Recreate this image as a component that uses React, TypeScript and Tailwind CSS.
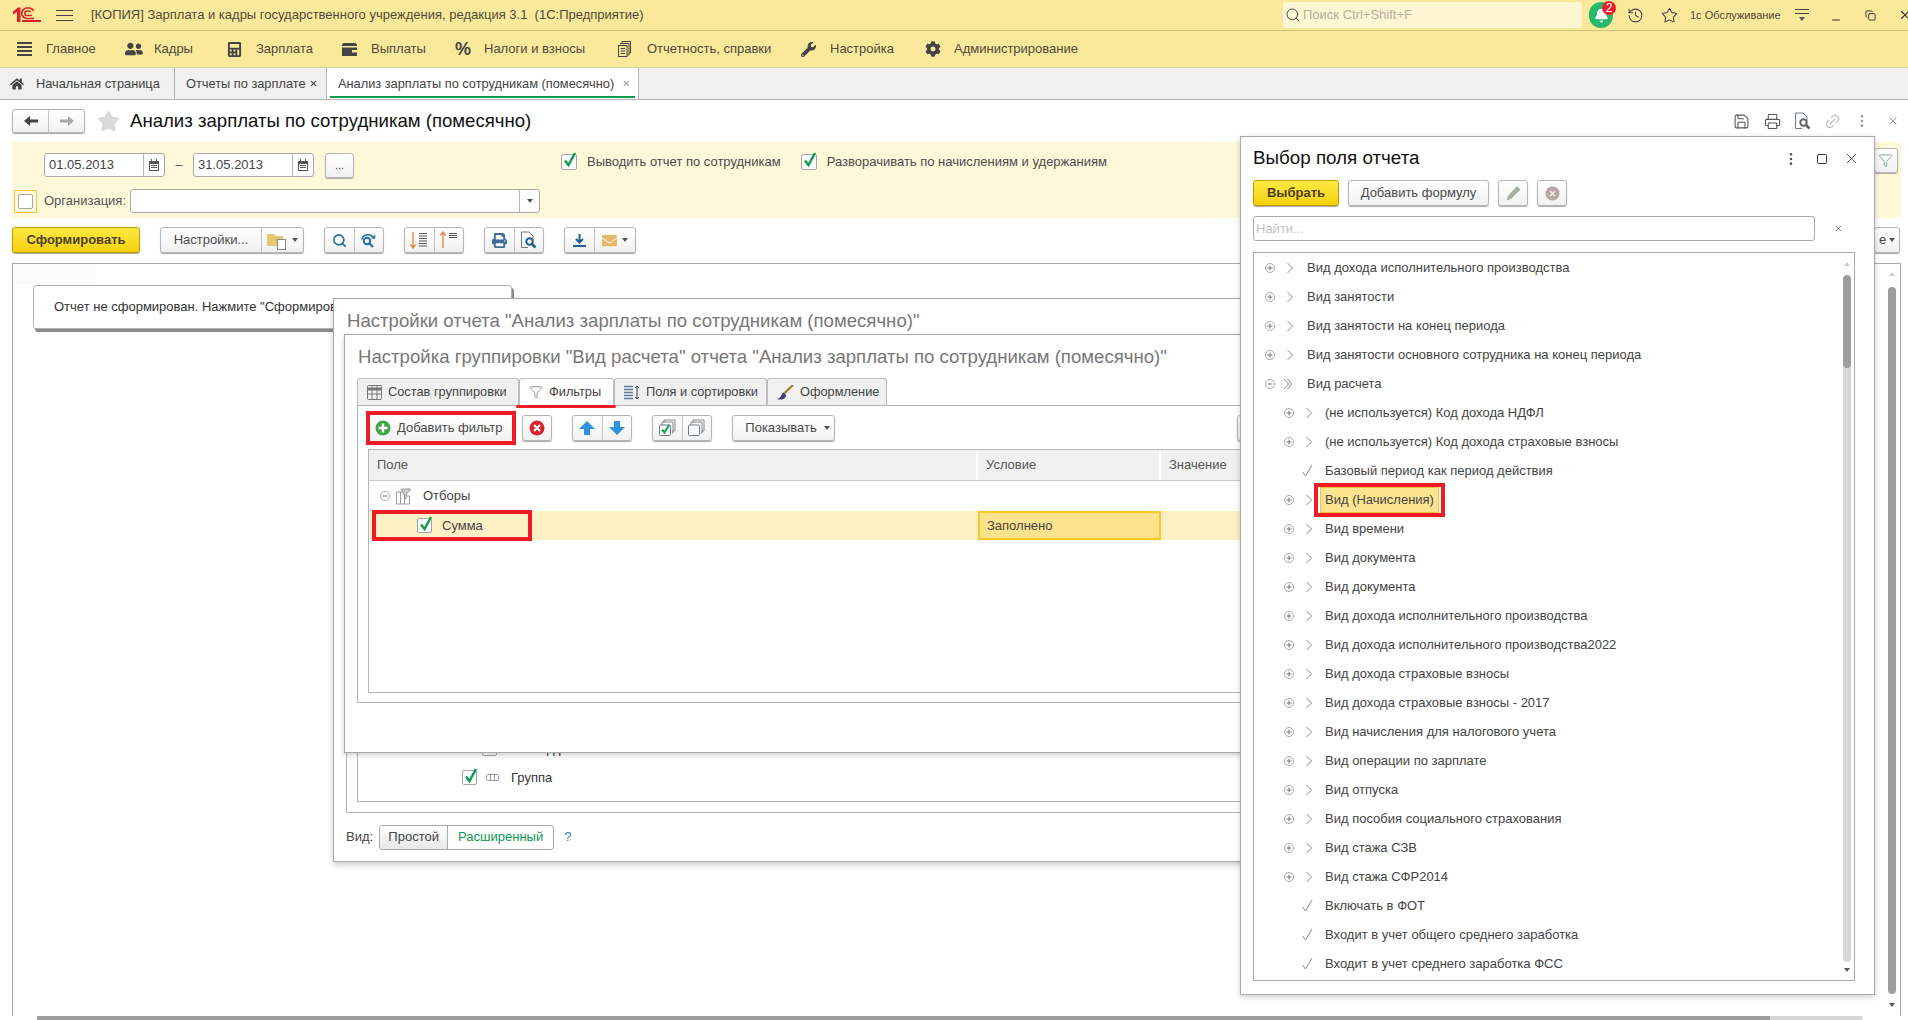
import type { ReactNode } from "react";
import { FaCalculator, FaCog, FaEnvelope, FaFolder, FaHome, FaPrint, FaUserFriends, FaWrench } from "react-icons/fa";
import { Bell, Copy, EllipsisVertical, Filter, History, Link2, Minus, Printer, Save, Search, Square, Star, X } from "lucide-react";

const btn = "flex shrink-0 items-center justify-center border border-[#b5b5b5] rounded-[3px] bg-linear-to-b from-white to-[#f1f1f1] shadow-[0_1px_1px_#a8a8a8] text-[#4b4b4b]";
const btnYellow = "flex shrink-0 items-center justify-center border border-[#b99c00] rounded-[3px] bg-linear-to-b from-[#ffe940] to-[#f5d000] shadow-[0_1px_1px_#a8a8a8] text-[#4b4020] font-bold";
const cell = "flex items-center justify-center h-full border-r border-[#c4c4c4] last:border-r-0";

const menu = [
  { label: "Главное", w: "w-[108px]", icon: <Burger /> },
  { label: "Кадры", w: "w-[102px]", icon: <FaUserFriends size={18} color="#444" /> },
  { label: "Зарплата", w: "w-[115px]", icon: <FaCalculator size={15} color="#444" /> },
  { label: "Выплаты", w: "w-[113px]", icon: <Wallet /> },
  { label: "Налоги и взносы", w: "w-[163px]", icon: <span className="text-[18px] font-bold text-[#444]">%</span> },
  { label: "Отчетность, справки", w: "w-[183px]", icon: <ReportsIcon /> },
  { label: "Настройка", w: "w-[124px]", icon: <FaWrench size={15} color="#444" /> },
  { label: "Администрирование", w: "w-[200px]", icon: <FaCog size={16} color="#444" /> },
];

const tree: { text: string; level: number; kind: "plus" | "open" | "check"; selected?: boolean }[] = [
  { text: "Вид дохода исполнительного производства", level: 0, kind: "plus" },
  { text: "Вид занятости", level: 0, kind: "plus" },
  { text: "Вид занятости на конец периода", level: 0, kind: "plus" },
  { text: "Вид занятости основного сотрудника на конец периода", level: 0, kind: "plus" },
  { text: "Вид расчета", level: 0, kind: "open" },
  { text: "(не используется) Код дохода НДФЛ", level: 1, kind: "plus" },
  { text: "(не используется) Код дохода страховые взносы", level: 1, kind: "plus" },
  { text: "Базовый период как период действия", level: 1, kind: "check" },
  { text: "Вид (Начисления)", level: 1, kind: "plus", selected: true },
  { text: "Вид времени", level: 1, kind: "plus" },
  { text: "Вид документа", level: 1, kind: "plus" },
  { text: "Вид документа", level: 1, kind: "plus" },
  { text: "Вид дохода исполнительного производства", level: 1, kind: "plus" },
  { text: "Вид дохода исполнительного производства2022", level: 1, kind: "plus" },
  { text: "Вид дохода страховые взносы", level: 1, kind: "plus" },
  { text: "Вид дохода страховые взносы - 2017", level: 1, kind: "plus" },
  { text: "Вид начисления для налогового учета", level: 1, kind: "plus" },
  { text: "Вид операции по зарплате", level: 1, kind: "plus" },
  { text: "Вид отпуска", level: 1, kind: "plus" },
  { text: "Вид пособия социального страхования", level: 1, kind: "plus" },
  { text: "Вид стажа СЗВ", level: 1, kind: "plus" },
  { text: "Вид стажа СФР2014", level: 1, kind: "plus" },
  { text: "Включать в ФОТ", level: 1, kind: "check" },
  { text: "Входит в учет общего среднего заработка", level: 1, kind: "check" },
  { text: "Входит в учет среднего заработка ФСС", level: 1, kind: "check" },
];

function Burger() {
  return (
    <span className="flex flex-col gap-[2px] w-[15px]">
      <i className="h-[2px] bg-[#444]" />
      <i className="h-[2px] bg-[#444]" />
      <i className="h-[2px] bg-[#444]" />
      <i className="h-[2px] bg-[#444]" />
    </span>
  );
}

function Wallet() {
  return (
    <svg width="15" height="13" viewBox="0 0 15 13">
      <path d="M0 1.500 1.500 0h12L15 1.500V3H0zM0 4.500h15V13H0zM10 7v2.500h5V7z" fill="#444" fillRule="evenodd" />
    </svg>
  );
}

function ReportsIcon() {
  return (
    <svg width="13" height="16" viewBox="0 0 13 16" fill="none">
      <path d="M4 2V.5h8.500V12H11" stroke="#444" />
      <path d="M2.500 3.500V2.500H11V14H9.500" stroke="#444" />
      <rect x=".5" y="4.500" width="8.500" height="11" stroke="#444" />
      <path d="M2.500 7.500h4.500M2.500 10h4.500M2.500 12.500h4.500" stroke="#444" />
    </svg>
  );
}

function Logo() {
  return (
    <svg width="29" height="18" viewBox="0 0 29 18" fill="none">
      <path d="M1 5.500 6 1.500h2.500V16H5V6L1 8.500z" fill="#d9252a" />
      <path d="M22 12.500h-7a5 5 0 0 1 0-10.500h2a5 5 0 0 1 4.500 3" stroke="#d9252a" strokeWidth="1.700" />
      <path d="M20 9.500h-5a2 2 0 0 1 0-4.500h2a2 2 0 0 1 1.500 .8" stroke="#d9252a" strokeWidth="1.500" />
      <path d="M10 15h19" stroke="#d9252a" strokeWidth="2" />
    </svg>
  );
}

function Check({ small }: { small?: boolean }) {
  return (
    <span className={`relative block shrink-0 border border-[#a5a5a5] rounded-[2px] bg-white ${small ? "w-[15px] h-[15px]" : "w-[16px] h-[16px]"}`}>
      <svg className="absolute left-[1px] top-[-4px]" width="14" height="17" viewBox="0 0 14 17" fill="none">
        <path d="M2 9.500 5.500 14 12 2" stroke="#0d9b50" strokeWidth="2.400" />
      </svg>
    </span>
  );
}

function CalendarBtn() {
  return (
    <span className="flex items-center justify-center w-[21px] h-full border-l border-[#b5b5b5]">
      <svg width="10" height="12" viewBox="0 0 10 12">
        <path d="M0 2h2V0h1v2h4V0h1v2h2v10H0zM1 5v6h8V5z" fill="#555" fillRule="evenodd" />
        <path d="M2 6h6v1H2zM2 8h6v1H2z" fill="#555" />
      </svg>
    </span>
  );
}

function DateField({ value }: { value: string }) {
  return (
    <div className="flex items-center w-[121px] h-[24px] border border-[#a9a9a9] rounded-[3px] bg-white">
      <span className="flex-1 pl-[4px] text-[#444]">{value}</span>
      <CalendarBtn />
    </div>
  );
}

function Caret() {
  return <i className="block w-0 h-0 border-x-[3px] border-x-transparent border-t-[4px] border-t-[#555]" />;
}

function SortIcon({ up }: { up?: boolean }) {
  return (
    <svg width="20" height="18" viewBox="0 0 20 18" fill="none">
      <path d={up ? "M4 17V2M1.500 4.500 4 1l2.500 3.500" : "M4 1v15M1.500 13.500 4 17l2.500-3.500"} stroke="#e8823a" strokeWidth="1.300" />
      <path d={up ? "M10 2.500h8M10 4.500h8M10 6.500h8" : "M10 2.500h8M10 5h8M10 7.500h8M10 10h8M10 12.500h8M10 15h8"} stroke="#555" strokeWidth="1" />
    </svg>
  );
}

function PreviewIcon({ color = "#1f5f86" }: { color?: string }) {
  return (
    <svg width="17" height="19" viewBox="0 0 17 19" fill="none">
      <path d="M8 16.500H1.500V1H9l4 4v4" stroke="#6d7d88" strokeWidth="1" />
      <circle cx="9.500" cy="10.500" r="3.200" stroke={color} strokeWidth="2" />
      <path d="m12 13 3.500 3.500" stroke={color} strokeWidth="2.500" />
    </svg>
  );
}

function RefineIcon() {
  return (
    <svg width="17" height="17" viewBox="0 0 17 17" fill="none">
      <circle cx="7" cy="9" r="3.200" stroke="#1f6ea5" strokeWidth="2" />
      <path d="m9.500 11.500 3.500 3.500" stroke="#1f6ea5" strokeWidth="2.200" />
      <path d="M2 7.500C2.500 3 9 1 13 5" stroke="#1f6ea5" strokeWidth="1.600" />
      <path d="M15.500 2.500 15 7l-4-.8z" fill="#1f6ea5" />
    </svg>
  );
}

function FilterCheck({ label, className }: { label: string; className: string }) {
  return (
    <label className={`flex items-center gap-[10px] ${className}`}>
      <Check />
      <span className="text-[#4b4b4b] whitespace-nowrap">{label}</span>
    </label>
  );
}

function PlusMark() {
  return (
    <svg className="shrink-0" width="10" height="10" viewBox="0 0 10 10" fill="none">
      <circle cx="5" cy="5" r="4.500" stroke="#a9a9a9" />
      <path d="M2.500 5h5M5 2.500v5" stroke="#777" />
    </svg>
  );
}

function MinusMark() {
  return (
    <svg className="shrink-0" width="10" height="10" viewBox="0 0 10 10" fill="none">
      <circle cx="5" cy="5" r="4.500" stroke="#a9a9a9" />
      <path d="M2.500 5h5" stroke="#777" />
    </svg>
  );
}

function Chevron({ open }: { open?: boolean }) {
  return (
    <svg className="block shrink-0" width="8" height="12" viewBox="0 0 8 12" fill="none">
      <path d={open ? "M0 1l4.500 5L0 11" : "M1.500 1l5 5-5 5"} stroke="#888" />
      {open && <path d="M3.500 1l4 5-4 5" stroke="#888" />}
    </svg>
  );
}

function TreeRow({ text, level, kind, selected }: (typeof tree)[number]) {
  return (
    <div className={`flex items-center h-[29px] shrink-0 ${level === 1 ? "pl-[30px]" : "pl-[11px]"}`}>
      {kind === "check" ? (
        <svg className="ml-[18px] mr-[12px] shrink-0" width="11" height="13" viewBox="0 0 11 13" fill="none">
          <path d="M.5 8l3 4L10 1" stroke="#888" />
        </svg>
      ) : (
        <>
          {kind === "plus" ? <PlusMark /> : <MinusMark />}
          <span className={kind === "open" ? "ml-[9px] mr-[15px]" : level === 1 ? "ml-[11px] mr-[12px]" : "ml-[11px] mr-[13px]"}>
            <Chevron open={kind === "open"} />
          </span>
        </>
      )}
      {selected ? (
        <span className="-ml-[11px] px-[2px] border-[4px] border-[#ee1c25]">
          <span className="block h-[26px] leading-[24px] px-[4px] bg-[#fee48f] border border-[#f5c242] text-[#444]">{text}</span>
        </span>
      ) : (
        <span className="text-[#444] whitespace-nowrap">{text}</span>
      )}
    </div>
  );
}

function TabItem({ icon, label, w, active }: { icon: ReactNode; label: string; w: string; active?: boolean }) {
  return (
    <div className={`flex items-center gap-[6px] pl-[9px] h-[27px] border-t border-r border-l rounded-t-[3px] border-[#bdbdbd] text-[12.8px] text-[#444] ${w} ${active ? "bg-white" : "bg-[#f0f0f0]"}`}>
      {icon}
      <span className="whitespace-nowrap">{label}</span>
    </div>
  );
}

function SettingsDialog() {
  return (
    <section className="absolute left-[333px] top-[298px] w-[931px] h-[564px] flex flex-col pl-[12px] bg-white border border-[#a9a9a9] shadow-[0_3px_6px_rgba(0,0,0,0.2)]">
      <h2 className="h-[42px] ml-[1px] pt-[10px] text-[18.6px] leading-[24px] text-[#777] whitespace-nowrap">Настройки отчета "Анализ зарплаты по сотрудникам (помесячно)"</h2>
      <div className="flex-1 p-[10px] border border-[#b5b5b5] flex">
        <div className="flex-1 flex flex-col justify-end pb-[9px] border border-[#b5b5b5]">
          <div className="flex items-center h-[29px] pl-[124px] gap-[34px]">
            <span className="block w-[15px] h-[15px] border border-[#a5a5a5] rounded-[2px] bg-white" />
            <span className="text-[#333]">Вид расчета</span>
          </div>
          <div className="flex items-center h-[29px] pl-[104px] gap-[9px]">
            <Check small />
            <svg width="13" height="7" viewBox="0 0 13 7" fill="none">
              <rect x=".5" y=".5" width="12" height="6" rx="1" stroke="#999" />
              <path d="M4.500 1v5M8.500 1v5" stroke="#999" />
            </svg>
            <span className="ml-[3px] text-[#333]">Группа</span>
          </div>
        </div>
      </div>
      <div className="flex items-center h-[48px] gap-[5px] text-[#444]">
        <span>Вид:</span>
        <div className="flex h-[25px] w-[175px] ml-[1px] border border-[#a9a9a9] rounded-[3px] overflow-hidden">
          <span className="flex items-center justify-center w-[68px] bg-linear-to-b from-white to-[#e8e8e8] border-r border-[#a9a9a9]">Простой</span>
          <span className="flex items-center justify-center flex-1 text-[#0d9b50]">Расширенный</span>
        </div>
        <span className="ml-[5px] text-[#1e80c8]">?</span>
      </div>
    </section>
  );
}

function GroupDialog() {
  return (
    <section className="absolute left-[344px] top-[334px] w-[920px] h-[419px] flex flex-col pl-[12px] bg-white border border-[#a9a9a9] shadow-[0_2px_5px_rgba(0,0,0,0.2)]">
      <h2 className="h-[43px] ml-[1px] pt-[10px] text-[18.6px] leading-[24px] text-[#777] whitespace-nowrap">Настройка группировки "Вид расчета" отчета "Анализ зарплаты по сотрудникам (помесячно)"</h2>
      <div className="flex h-[27px] items-end">
        <TabItem w="w-[162px]" label="Состав группировки" icon={<GridIcon />} />
        <div className="relative">
          <TabItem w="w-[95px]" active label="Фильтры" icon={<Filter size={14} color="#888" strokeWidth={1.500} />} />
          <i className="absolute left-[-3px] right-[-2px] bottom-[-3px] h-[3px] rounded-[2px] bg-[#ee1c25]" />
        </div>
        <TabItem w="w-[153px]" label="Поля и сортировки" icon={<FieldsIcon />} />
        <TabItem w="w-[120px]" label="Оформление" icon={<BrushIcon />} />
      </div>
      <div className="flex-1 flex flex-col mb-[49px] px-[10px] pb-[9px] border-t border-l border-b border-[#b5b5b5]">
        <div className="flex items-center h-[43px] shrink-0">
          <div className="ml-[-2px] shrink-0 border-[4px] border-[#ee1c25]">
            <button className="flex items-center gap-[6px] w-[142px] h-[26px] pl-[5px] text-[#4b4b4b] bg-linear-to-b from-white to-[#f1f1f1]">
              <PlusCircle />
              Добавить фильтр
            </button>
          </div>
          <button className={`${btn} w-[30px] h-[26px] ml-[6px]`}><DeleteCircle /></button>
          <div className={`${btn} w-[60px] h-[26px] ml-[20px]`}>
            <span className={`${cell} flex-1`}><BlueArrow /></span>
            <span className={`${cell} flex-1`}><BlueArrow down /></span>
          </div>
          <div className={`${btn} w-[60px] h-[26px] ml-[20px]`}>
            <span className={`${cell} flex-1`}><CopyCheck checked /></span>
            <span className={`${cell} flex-1`}><CopyCheck /></span>
          </div>
          <button className={`${btn} w-[103px] h-[26px] ml-[20px] pl-[8px] gap-[7px]`}>Показывать <Caret /></button>
          <button className={`${btn} w-[30px] h-[26px] ml-[402px]`} />
        </div>
        <div className="flex-1 border border-[#b5b5b5]">
          <div className="flex h-[31px] bg-[#f0f0f0] border-b border-[#c8c8c8] text-[#555]">
            <span className="flex items-center w-[609px] pl-[8px] border-r-2 border-white">Поле</span>
            <span className="flex items-center w-[183px] pl-[8px] border-r-2 border-white">Условие</span>
            <span className="flex items-center flex-1 pl-[8px]">Значение</span>
          </div>
          <div className="flex items-center h-[30px] pl-[11px] text-[#444]">
            <MinusMark />
            <svg className="ml-[5px] mr-[12px]" width="16" height="17" viewBox="0 0 16 17" fill="none">
              <path d="M1.500 4h4v12h-4zM5.500 4h4v12h-4zM9.500 8h5v8h-5z" stroke="#999" />
              <path d="M6 1h9.500L11 7v4l-1.500-1V7z" fill="#ccc" stroke="#999" />
            </svg>
            Отборы
          </div>
          <div className="flex h-[29px] bg-[#fdf0c4]">
            <div className="flex items-center w-[609px]">
              <div className="flex items-center ml-[3px] w-[160px] h-[31px] border-[4px] border-[#ee1c25] gap-[10px] pl-[41px] text-[#444]">
                <Check small />
                Сумма
              </div>
            </div>
            <div className="flex items-center w-[183px] pl-[7px] bg-[#fde38d] border-2 border-[#fbc926] text-[#444]">Заполнено</div>
          </div>
        </div>
      </div>
    </section>
  );
}

function GridIcon() {
  return (
    <svg width="15" height="15" viewBox="0 0 15 15" fill="none">
      <rect x=".5" y=".5" width="14" height="14" rx="1" stroke="#777" />
      <path d="M1 4h13" stroke="#777" strokeWidth="3" />
      <path d="M5 1v13M10 1v13M1 9h13" stroke="#777" />
    </svg>
  );
}

function FieldsIcon() {
  return (
    <svg width="16" height="15" viewBox="0 0 16 15" fill="none">
      <path d="M0 1.500h9M0 4.500h9M0 7.500h9M0 10.500h9M0 13.500h9" stroke="#5b7d99" strokeWidth="1.300" />
      <path d="M13 1v13M11 3l2-2 2 2M11 12l2 2 2-2" stroke="#444" />
    </svg>
  );
}

function BrushIcon() {
  return (
    <svg width="17" height="15" viewBox="0 0 17 15" fill="none">
      <path d="M16 0 7.500 8" stroke="#a37628" strokeWidth="2" />
      <path d="M7 7.500C4 8 5 13 0 14c4 1.500 9 0 9-4z" fill="#3f3a78" />
    </svg>
  );
}

function PlusCircle() {
  return (
    <svg width="16" height="16" viewBox="0 0 16 16">
      <circle cx="8" cy="8" r="7.500" fill="#3fa648" />
      <path d="M8 3.500v9M3.500 8h9" stroke="#fff" strokeWidth="2.400" />
    </svg>
  );
}

function DeleteCircle() {
  return (
    <svg width="16" height="16" viewBox="0 0 16 16">
      <circle cx="8" cy="8" r="7.500" fill="#d8262c" />
      <path d="m5 5 6 6M11 5l-6 6" stroke="#fff" strokeWidth="2" />
    </svg>
  );
}

function BlueArrow({ down }: { down?: boolean }) {
  return (
    <svg width="16" height="14" viewBox="0 0 16 14">
      <path d={down ? "M5 0h6v6h5l-8 8-8-8h5z" : "M5 14h6V8h5L8 0 0 8h5z"} fill="#2f93e0" />
    </svg>
  );
}

function CopyCheck({ checked }: { checked?: boolean }) {
  return (
    <svg width="17" height="17" viewBox="0 0 17 17" fill="none">
      <path d="M5 4V1h11v11h-3" stroke="#888" />
      <path d="M3 6V3h11v11h-1" stroke="#888" />
      <rect x=".5" y="6" width="11" height="10.500" rx="1" fill="#fff" stroke="#6d7d88" />
      {checked && <path d="m3 10.500 2.500 3L10 6" stroke="#0d9b50" strokeWidth="2" />}
    </svg>
  );
}

function FieldDialog() {
  return (
    <section className="absolute left-[1240px] top-[136px] w-[635px] h-[859px] flex flex-col pl-[12px] pr-[13px] bg-white border border-[#a9a9a9] shadow-[0_2px_6px_rgba(0,0,0,0.2)]">
      <header className="flex items-center h-[43px] shrink-0">
        <h2 className="flex-1 text-[18.8px] text-[#111]">Выбор поля отчета</h2>
        <EllipsisVertical size={16} color="#555" />
        <Square size={12} color="#333" className="ml-[17px]" />
        <X size={17} color="#444" strokeWidth={1.300} className="ml-[15px] mr-[1px]" />
      </header>
      <div className="flex h-[26px] shrink-0">
        <button className={`${btnYellow} w-[86px]`}>Выбрать</button>
        <button className={`${btn} w-[141px] ml-[9px]`}>Добавить формулу</button>
        <button className={`${btn} w-[30px] ml-[9px]`}>
          <svg width="15" height="15" viewBox="0 0 15 15">
            <path d="M11 0l3.500 3.500L5 13l-4.500 1.500L2 10z" fill="#a5b0a0" />
          </svg>
        </button>
        <button className={`${btn} w-[30px] ml-[9px]`}>
          <svg width="15" height="15" viewBox="0 0 15 15">
            <circle cx="7.500" cy="7.500" r="7" fill="#b8a6a6" />
            <path d="m5 5 5 5M10 5l-5 5" stroke="#eee" strokeWidth="1.600" />
          </svg>
        </button>
      </div>
      <div className="flex items-center mt-[10px] h-[25px] shrink-0">
        <div className="flex items-center w-[562px] h-full pl-[2px] border border-[#a9a9a9] rounded-[3px] text-[#c4c4c4]">Найти...</div>
        <X size={9} color="#555" strokeWidth={2} className="ml-[19px]" />
      </div>
      <div className="flex w-[602px] h-[729px] mt-[11px] border border-[#a9a9a9] overflow-hidden">
        <div className="flex-1 flex flex-col">
          {tree.map((row, i) => (
            <TreeRow key={i} {...row} />
          ))}
        </div>
        <div className="flex flex-col items-center w-[8px] mr-[3px] pt-[9px] pb-[8px]">
          <i className="block w-0 h-0 border-x-[3px] border-x-transparent border-b-[4px] border-b-[#ccc]" />
          <div className="flex-1 w-full mt-[9px] mb-[6px] rounded-[4px] bg-[#d6d6d6] overflow-hidden">
            <div className="h-[93px] rounded-[4px] bg-[#9d9d9d]" />
          </div>
          <Caret />
        </div>
      </div>
    </section>
  );
}

export default function App() {
  return (
    <div className="relative flex flex-col w-[1908px] h-[1020px] overflow-hidden bg-white text-[13px] font-['Liberation_Sans',Arial,sans-serif]">
      <header className="flex items-center h-[31px] shrink-0 bg-[#fbe99b] border-b border-[#d3c27a] text-[#4c4a3c] [&>*]:shrink-0">
        <span className="ml-[12px]"><Logo /></span>
        <span className="flex flex-col gap-[4px] w-[17px] ml-[15px]">
          <i className="h-px bg-[#444]" />
          <i className="h-px bg-[#444]" />
          <i className="h-px bg-[#444]" />
        </span>
        <span className="ml-[18px] w-[1192px] whitespace-pre">[КОПИЯ] Зарплата и кадры государственного учреждения, редакция 3.1  (1С:Предприятие)</span>
        <div className="flex items-center gap-[2px] w-[299px] h-[26px] pl-[2px] rounded-[3px] bg-[#fef7d3] text-[#b5b09a]">
          <Search size={16} color="#444" strokeWidth={1.500} />
          Поиск Ctrl+Shift+F
        </div>
        <span className="relative flex items-center justify-center w-[24px] h-[26px] ml-[7px] rounded-full bg-[#27b86c]">
          <Bell size={15} color="#fff" fill="#fff" />
          <b className="absolute right-[-3px] top-[-1px] flex items-center justify-center w-[14px] h-[14px] rounded-full bg-[#e8202a] text-[12px] font-normal text-white">2</b>
        </span>
        <History size={17} color="#444" strokeWidth={1.500} className="ml-[14px]" />
        <Star size={17} color="#444" strokeWidth={1.500} className="ml-[17px]" />
        <span className="ml-[12px] text-[11px] whitespace-nowrap">1с Обслуживание</span>
        <span className="flex flex-col items-center gap-[3px] w-[14px] ml-[14px]">
          <i className="w-full h-px bg-[#444]" />
          <i className="w-full h-px bg-[#444]" />
          <Caret />
        </span>
        <Minus size={12} color="#333" className="ml-[21px] mt-[9px]" />
        <Copy size={11} color="#333" className="ml-[23px]" />
        <X size={14} color="#333" className="ml-[22px]" />
      </header>

      <nav className="flex items-center h-[37px] shrink-0 pl-[17px] bg-[#fbe99b] border-b border-[#d9d0a0] text-[#4c4a3c]">
        {menu.map((m) => (
          <div key={m.label} className={`flex items-center shrink-0 ${m.w}`}>
            <span className="flex items-center w-[29px]">{m.icon}</span>
            <span className="whitespace-nowrap">{m.label}</span>
          </div>
        ))}
      </nav>

      <div className="flex h-[32px] shrink-0 bg-[#f0f0f0] border-b border-[#b5b5b5] text-[12.8px] text-[#444]">
        <div className="flex items-center gap-[12px] w-[175px] pl-[10px] border-r border-[#b5b5b5]">
          <FaHome size={14} color="#444" />
          Начальная страница
        </div>
        <div className="flex items-center justify-between w-[152px] pl-[11px] pr-[8px] border-r border-[#b5b5b5]">
          Отчеты по зарплате
          <X size={9} color="#555" strokeWidth={3} />
        </div>
        <div className="relative flex items-center justify-between w-[312px] pl-[11px] pr-[7px] bg-white border-r border-[#b5b5b5]">
          Анализ зарплаты по сотрудникам (помесячно)
          <X size={9} color="#aaa" strokeWidth={3} />
          <i className="absolute left-[3px] right-[3px] bottom-[1px] h-[2px] bg-[#0d9b50]" />
        </div>
      </div>

      <div className="flex items-center h-[42px] shrink-0 pl-[12px] pr-[9px]">
        <div className={`${btn} w-[73px] h-[24px]`}>
          <span className={`${cell} flex-1`}>
            <svg width="14" height="10" viewBox="0 0 14 10"><path d="M14 3.500H6V0L0 5l6 5V6.500h8z" fill="#444" /></svg>
          </span>
          <span className={`${cell} flex-1`}>
            <svg width="14" height="10" viewBox="0 0 14 10"><path d="M0 3.500h8V0l6 5-6 5V6.500H0z" fill="#aaa" /></svg>
          </span>
        </div>
        <Star size={23} color="#d9d9d9" fill="#d9d9d9" className="ml-[12px]" />
        <h1 className="ml-[10px] flex-1 text-[18.6px] text-[#111]">Анализ зарплаты по сотрудникам (помесячно)</h1>
        <Save size={17} color="#555" strokeWidth={1.500} />
        <Printer size={17} color="#555" strokeWidth={1.500} className="ml-[14px]" />
        <span className="ml-[13px]"><PreviewIcon color="#666" /></span>
        <Link2 size={17} color="#c4c4c4" className="ml-[13px] -rotate-45" />
        <EllipsisVertical size={16} color="#999" className="ml-[13px]" />
        <X size={12} color="#999" className="ml-[17px]" />
      </div>

      <div className="flex flex-col h-[76px] shrink-0 ml-[12px] mr-[7px] bg-[#fff9da]">
        <div className="flex items-start pt-[11px] h-[47px] pl-[32px]">
          <DateField value="01.05.2013" />
          <span className="w-[28px] text-center leading-[24px] text-[#555]">–</span>
          <DateField value="31.05.2013" />
          <button className={`${btn} w-[29px] h-[25px] ml-[11px] text-[11px]`}>...</button>
          <FilterCheck className="ml-[207px] -mt-[1px]" label="Выводить отчет по сотрудникам" />
          <FilterCheck className="ml-[20px] -mt-[1px]" label="Разворачивать по начислениям и удержаниям" />
          <button className={`${btn} w-[24px] h-[25px] ml-[767px] -mt-[5px]`}>
            <Filter size={15} color="#8aa" strokeWidth={1.500} />
          </button>
        </div>
        <div className="flex items-center h-[24px] pl-[2px]">
          <span className="flex items-center justify-center w-[23px] h-[23px] border border-[#f5c242]">
            <span className="w-[15px] h-[15px] border border-[#a5a5a5] rounded-[2px] bg-white" />
          </span>
          <span className="ml-[7px] w-[86px] text-[#555]">Организация:</span>
          <div className="flex justify-end w-[410px] h-[24px] border border-[#a9a9a9] rounded-[3px] bg-white">
            <span className="flex items-center justify-center w-[20px] border-l border-[#b5b5b5]"><Caret /></span>
          </div>
        </div>
      </div>

      <div className="flex items-start h-[45px] shrink-0 pt-[9px] pl-[12px]">
        <button className={`${btnYellow} w-[128px] h-[26px] text-[13px]`}>Сформировать</button>
        <div className={`${btn} w-[144px] h-[26px] ml-[20px]`}>
          <span className={`${cell} w-[101px]`}>Настройки...</span>
          <span className="flex flex-1 items-center justify-center gap-[9px]">
            <span className="relative">
              <FaFolder size={16} color="#e9c56e" />
              <i className="absolute right-[-3px] bottom-[-2px] w-[9px] h-[11px] bg-white border border-[#888]" />
            </span>
            <Caret />
          </span>
        </div>
        <div className={`${btn} w-[60px] h-[26px] ml-[20px]`}>
          <span className={`${cell} flex-1`}><Search size={15} color="#1f6ea5" strokeWidth={2.500} /></span>
          <span className={`${cell} flex-1`}><RefineIcon /></span>
        </div>
        <div className={`${btn} w-[60px] h-[26px] ml-[20px]`}>
          <span className={`${cell} flex-1`}><SortIcon /></span>
          <span className={`${cell} flex-1`}><SortIcon up /></span>
        </div>
        <div className={`${btn} w-[60px] h-[26px] ml-[20px]`}>
          <span className={`${cell} flex-1`}><FaPrint size={15} color="#3f6d95" /></span>
          <span className={`${cell} flex-1`}><PreviewIcon /></span>
        </div>
        <div className={`${btn} w-[72px] h-[26px] ml-[20px]`}>
          <span className={`${cell} w-[30px]`}>
            <svg width="15" height="15" viewBox="0 0 15 15" fill="none">
              <path d="M7.500 1v8M4 6l3.500 3.500L11 6M1 13h13" stroke="#1f5f96" strokeWidth="2" />
            </svg>
          </span>
          <span className="flex flex-1 items-center justify-center gap-[5px]">
            <FaEnvelope size={15} color="#e5b964" />
            <Caret />
          </span>
        </div>
        <div className="flex-1" />
        <button className={`${btn} w-[26px] h-[26px] mr-[8px] gap-[3px] text-[#444]`}>е <Caret /></button>
      </div>

      <main className="relative flex-1 ml-[12px] mr-[7px] border-t border-l border-r border-[#a9a9a9]">
        <div className="w-[83px] h-[20px] bg-[#fbfbfb]" />
        <div className="absolute left-[20px] top-[21px] flex items-center w-[479px] h-[44px] pl-[20px] border border-[#b0b0b0] rounded-[3px] bg-white text-[#333] shadow-[2px_3px_0_#8d8d8d]">
          Отчет не сформирован. Нажмите "Сформировать"
        </div>
        <div className="absolute right-[4px] top-[8px] bottom-[9px] flex flex-col items-center w-[8px]">
          <i className="block w-0 h-0 border-x-[3px] border-x-transparent border-b-[4px] border-b-[#ccc]" />
          <div className="flex-1 w-full mt-[11px] mb-[9px] rounded-[4px] bg-[#9d9d9d]" />
          <Caret />
        </div>
      </main>

      <div className="flex items-center h-[4px] shrink-0 pl-[37px] pr-[30px] overflow-hidden">
        <div className="flex w-[1826px] h-full bg-[#d6d6d6] rounded-r-[3px]">
          <div className="w-[1733px] h-full bg-[#9d9d9d]" />
        </div>
      </div>

      <SettingsDialog />
      <GroupDialog />
      <FieldDialog />
    </div>
  );
}
